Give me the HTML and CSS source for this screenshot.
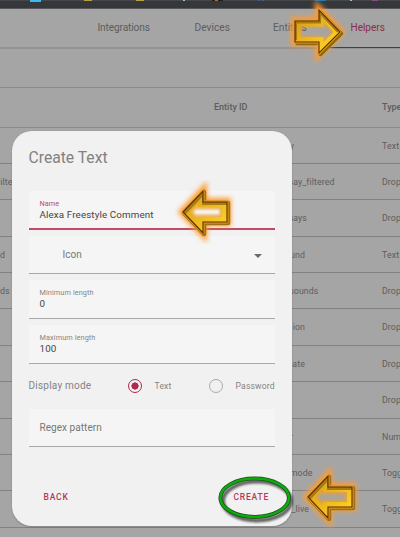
FILE: index.html
```
<!DOCTYPE html>
<html lang="en">
<head>
<meta charset="utf-8">
<title>Helpers</title>
<link rel="stylesheet" href="styles.css">
</head>
<body>
<svg width="0" height="0" class="defs">
  <defs>
    <linearGradient id="gold" x1="0" y1="0" x2="1" y2="1">
      <stop offset="0" stop-color="#d99a10"/>
      <stop offset="1" stop-color="#ffd829"/>
    </linearGradient>
    <clipPath id="arrowClip"><path d="M11 32 31 11V22H55V42H31V53Z"/></clipPath>
    <filter id="glow" x="-40%" y="-40%" width="180%" height="180%"><feGaussianBlur stdDeviation="2.8"/></filter>
    <filter id="soft" x="-40%" y="-40%" width="180%" height="180%"><feGaussianBlur stdDeviation="1.3"/></filter>
    <symbol id="arrow" viewBox="0 0 68 64">
      <path d="M11 32 31 11V22H55V42H31V53Z" fill="none" stroke="#ff9a30" stroke-width="8" filter="url(#glow)"/>
      <path d="M12 33 32 12V23H56V43H32V54Z" fill="none" stroke="#9c7212" stroke-width="4.5" stroke-linejoin="round"/>
      <path d="M11 32 31 11V22H55V42H31V53Z" fill="none" stroke="#dba521" stroke-width="3" stroke-linejoin="round"/>
      <g clip-path="url(#arrowClip)">
        <path d="M11 32 31 11V22H55V42H31V53Z" fill="none" stroke="#e9a32f" stroke-width="15" opacity=".7" filter="url(#soft)"/>
        <path d="M11 32 31 11V22H55V42H31V53Z" fill="none" stroke="url(#gold)" stroke-width="10"/>
        <path d="M12 33 32 12V23H56" fill="none" stroke="#a57c14" stroke-width="4"/>
      </g>
      <path d="M11 32 31 11V22H55V42H31V53Z" fill="none" stroke="#682405" stroke-width="1.1"/>
    </symbol>
    <symbol id="arrow-right" viewBox="0 0 68 64">
      <path d="M56 32 35 10V21H11V42H35V53Z" fill="none" stroke="#ff9a30" stroke-width="8" filter="url(#glow)"/>
      <path d="M57.500 33.500 36.500 12V23H13V43.500H36.500V54.500Z" fill="none" stroke="#8c680c" stroke-width="3.500" stroke-linejoin="round"/>
      <path d="M56 32 35 10V21H11V42H35V53Z" fill="none" stroke="#dba521" stroke-width="2.800" stroke-linejoin="round"/>
      <path d="M52 32 38 17V24H14V39H38V47Z" fill="none" stroke="#e9a32f" stroke-width="6" opacity=".6" filter="url(#soft)"/>
      <path d="M53 32 37 15V24H14V39.500H37V48Z" fill="none" stroke="url(#gold)" stroke-width="5"/>
      <path d="M12 40V22.500H36V13L54 32" fill="none" stroke="#a57c14" stroke-width="2"/>
      <path d="M56 32 35 10V21H11V42H35V53Z" fill="none" stroke="#682405" stroke-width="1.100"/>
    </symbol>
  </defs>
</svg>

<div class="page">
  <div class="browser-bar">
    <svg width="400" height="2" viewBox="0 0 400 2">
      <path fill="#454749" d="M0 0h400v1H0z"/>
      <path fill="#3cb9f0" d="M30 0h11v2H30z"/>
      <path fill="#baa044" d="M84 0h8v1h-8zM136 0h8v1h-8z"/>
      <path fill="#a9c0bf" d="M183 0h2v1h-2zM350 0h2v1h-2z"/>
      <path fill="#241f1e" d="M212 0h11v1h-11z"/>
      <path fill="#b67228" d="M215 0h3v1h-3z"/>
      <path fill="#3f61a0" d="M258 0h2v1h-2zM262 0h2v1h-2z"/>
      <path fill="#1d79bd" d="M315 0h11v1h-11z"/>
      <path fill="#865087" d="M372 0h6v1h-6z"/>
    </svg>
  </div>
  <nav class="tabs">
    <span class="tab t-int">Integrations</span>
    <span class="tab t-dev">Devices</span>
    <span class="tab t-ent">Entities</span>
    <span class="tab t-help">Helpers</span>
  </nav>
  <div class="toolbar"></div>
  <div class="head"><span></span><span>Entity ID</span><span>Type</span></div>
  <div class="rows">
    <div class="row"><span class="nm"></span><span class="id w1">y</span><span>Text</span></div>
    <div class="row"><span class="nm nf">ilte</span><span class="id w2">say_filtered</span><span>Drop</span></div>
    <div class="row"><span class="nm"></span><span class="id w3">says</span><span>Drop</span></div>
    <div class="row"><span class="nm n3">d</span><span class="id w4">und</span><span>Text</span></div>
    <div class="row"><span class="nm n8">ds</span><span class="id w5">sounds</span><span>Drop</span></div>
    <div class="row"><span class="nm"></span><span class="id w4">ion</span><span>Drop</span></div>
    <div class="row"><span class="nm"></span><span class="id w4">ate</span><span>Drop</span></div>
    <div class="row"><span class="nm"></span><span class="id"></span><span>Drop</span></div>
    <div class="row"><span class="nm"></span><span class="id w0">r</span><span>Num</span></div>
    <div class="row"><span class="nm"></span><span class="id w6">mode</span><span>Togg</span></div>
    <div class="row"><span class="nm"></span><span class="id w7">_live</span><span>Togg</span></div>
  </div>
</div>

<section class="dialog">
  <h1>Create Text</h1>
  <div class="field focus"><label>Name</label><b>Alexa Freestyle Comment</b></div>
  <div class="field single icon"><span>Icon</span><i class="caret"></i></div>
  <div class="field"><label>Minimum length</label><b>0</b></div>
  <div class="field"><label>Maximum length</label><b>100</b></div>
  <div class="mode">
    <span class="mode-label">Display mode</span>
    <i class="radio on"></i><span class="opt">Text</span>
    <i class="radio"></i><span class="opt">Password</span>
  </div>
  <div class="field single regex"><span>Regex pattern</span></div>
  <div class="actions"><span class="back">BACK</span><span class="create">CREATE</span></div>
</section>

<svg class="arrow a1" width="68" height="64"><use href="#arrow-right"/></svg>
<svg class="arrow a2" width="68" height="64"><use href="#arrow"/></svg>
<svg class="arrow a3" width="68" height="64"><use href="#arrow"/></svg>
<svg class="ring" width="90" height="60" viewBox="0 0 90 60">
  <ellipse cx="47" cy="31" rx="34" ry="19.500" fill="none" stroke="#000" stroke-opacity=".6" stroke-width="4" filter="url(#soft)"/>
  <ellipse cx="44.700" cy="27.700" rx="34.300" ry="19.200" fill="none" stroke="#1d4b1d" stroke-width="4"/>
  <ellipse cx="44.700" cy="27.700" rx="34.300" ry="19.200" fill="none" stroke="#0aad0a" stroke-width="2.500"/>
</svg>
</body>
</html>
```
FILE: styles.css
```
* { box-sizing: border-box; }
body {
  margin: 0;
  width: 400px;
  height: 537px;
  overflow: hidden;
  position: relative;
  background: #a5a5a5;
  font-family: Roboto, "Liberation Sans", sans-serif;
  color: #5d5d5d;
}
.defs { position: absolute; }
.page { width: 400px; height: 537px; overflow: hidden; }
.browser-bar { height: 9px; background: #35373b; border-bottom: 1px solid #55575a; }
.browser-bar svg { display: block; }
.tabs {
  height: 40px;
  border-bottom: 2px solid #929292;
  display: grid;
  grid-template-columns: 97.500px 97px 78.500px 52px 75px;
  font-size: 10px;
  line-height: 38px;
  white-space: nowrap;
}
.t-int { grid-column: 2; letter-spacing: -.15px; }
.t-int, .t-dev, .t-ent { font-size: 10.200px; }
.t-help {
  height: 39px;
  padding-left: 25.500px;
  line-height: 37px;
  color: #8a2c47;
  border-bottom: 1px solid #96163f;
}
.toolbar { height: 39px; border-bottom: 1.500px solid #8a8a8a; }
.head, .row {
  display: grid;
  grid-template-columns: 214px 168px 18px;
  white-space: nowrap;
  font-size: 8.800px;
  letter-spacing: .1px;
}
.head { height: 39.500px; line-height: 38px; border-bottom: 1.500px solid #8a8a8a; font-weight: 500; font-size: 9px; letter-spacing: 0; }
.row { height: 36.400px; line-height: 36px; border-bottom: 1px solid #828282; }
.id, .nm { text-align: right; }
.nf { width: 12.500px; }
.n3 { width: 3.500px; }
.n8 { width: 8px; }
.w0 { width: 79px; }
.w1 { width: 80px; }
.w2 { width: 120.500px; }
.w3 { width: 93px; }
.w4 { width: 91px; }
.w5 { width: 104.500px; }
.w6 { width: 98.500px; }
.w7 { width: 95px; }

.dialog {
  position: absolute;
  left: 12px;
  top: 131px;
  width: 280px;
  height: 395px;
  padding: 0 17px 0 16.500px;
  border-radius: 20px;
  background: #f1f1f1;
  box-shadow: 0 1px 2px rgba(0, 0, 0, .2);
  color: #777;
}
h1 {
  margin: 0;
  height: 60px;
  line-height: 53px;
  font-size: 15.700px;
  font-weight: 400;
  letter-spacing: 0;
  color: #818181;
}
.field {
  height: 38.700px;
  margin-bottom: 6px;
  padding: 7px 11px 0;
  background: #f5f5f5;
  border-bottom: 1px solid #a9a9a9;
  border-radius: 2px 2px 0 0;
  display: flex;
  flex-direction: column;
}
.field label { font-size: 7.300px; line-height: 11px; letter-spacing: .1px; color: #858585; }
.field b { font-size: 9.800px; line-height: 12.500px; font-weight: 400; color: #454545; letter-spacing: .12px; }
.field.focus { border-bottom: 2px solid #c04a68; }
.field.focus label { color: #c04a68; }
.field.single {
  flex-direction: row;
  align-items: center;
  padding-top: 0;
  padding-bottom: 1px;
  font-size: 10px;
  letter-spacing: .05px;
}
.field.icon { padding-left: 34px; justify-content: space-between; }
.caret {
  margin-top: 4px;
  border: 4px solid transparent;
  border-top-color: #6a6a6a;
  border-bottom: 0;
  margin-right: 2px;
}
.mode {
  display: grid;
  grid-template-columns: 99px 27px 54.500px 26.500px 1fr;
  align-items: center;
  height: 34px;
  padding-bottom: 2px;
  font-size: 10px;
  letter-spacing: .22px;
  color: #848484;
}
.mode .opt { font-size: 8.600px; letter-spacing: .17px; }
.radio { width: 14px; height: 14px; border: 1.500px solid #aaa; border-radius: 50%; }
.radio.on { border-color: #ad2a4e; background: radial-gradient(circle, #ad2a4e 3.300px, transparent 3.900px); }
.field.regex { margin-top: 5px; padding-bottom: 0; }
.actions {
  display: flex;
  justify-content: space-between;
  padding: 37px 6px 0 15px;
  font-size: 8.500px;
  line-height: 14px;
  font-weight: 500;
  letter-spacing: .8px;
  color: #b73759;
}
.arrow { position: absolute; }
.a1 { left: 284px; top: 0; }
.a2 { left: 171.500px; top: 180px; }
.a3 { left: 296.500px; top: 464.500px; }
.ring { position: absolute; left: 210px; top: 470px; }
```
